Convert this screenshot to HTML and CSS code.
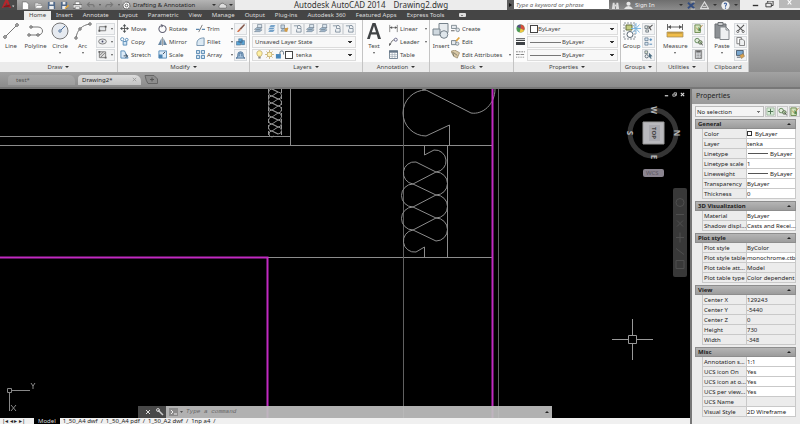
FILE: index.html
```html
<!DOCTYPE html>
<html lang="en">
<head>
    <meta charset="UTF-8">
    <meta name="viewport" content="width=device-width, initial-scale=1.0">
    <title>Autodesk AutoCAD 2014 - Drawing2.dwg</title>
    <link rel="stylesheet" href="styles.css">
</head>
<body>
    <!-- shared icons -->
    <svg class="sprite" aria-hidden="true">
        <symbol id="i-line" viewBox="0 0 18 18"><path d="M3 15L15 3" stroke="#777" fill="none"/><g fill="#fff" stroke="#555"><circle cx="3" cy="15" r="1.3"/><circle cx="15" cy="3" r="1.3"/></g></symbol>
        <symbol id="i-pline" viewBox="0 0 18 18"><path d="M4 5H11C17 5 17 13 11 13H2" stroke="#777" fill="none"/><g fill="#fff" stroke="#555"><circle cx="4" cy="5" r="1.2"/><circle cx="11" cy="13" r="1.2"/><circle cx="2" cy="13" r="1.2"/></g></symbol>
        <symbol id="i-circle" viewBox="0 0 18 18"><circle cx="9" cy="9" r="8" fill="#e6eaf0" stroke="#777"/><path d="M9 9L14 4" stroke="#4b6f9b"/><circle cx="9" cy="9" r="1.2" fill="#fff" stroke="#4b6f9b"/></symbol>
        <symbol id="i-arc" viewBox="0 0 18 18"><path d="M2 16C3 8 8 3 16 2" stroke="#777" fill="none"/><g fill="#fff" stroke="#555"><circle cx="2" cy="16" r="1.2"/><circle cx="6" cy="7" r="1.2"/><circle cx="16" cy="2" r="1.2"/></g></symbol>
        <symbol id="i-rect" viewBox="0 0 10 10"><path d="M1.5 3H8.5V7.500H1.500Z" fill="#e4e7ea" stroke="#777"/><path d="M7.500 2h2v2h-2zM.5 6.500h2v2h-2z" fill="#555"/></symbol>
        <symbol id="i-ellipse" viewBox="0 0 10 10"><ellipse cx="5" cy="5" rx="4.300" ry="2.800" fill="#e4e7ea" stroke="#777"/><circle cx="5" cy="5" r="1" fill="#446"/></symbol>
        <symbol id="i-hatch" viewBox="0 0 10 10"><path d="M1.500 2H8.500V8.500H1.500Z" fill="#ddd" stroke="#777"/><path d="M2 6L6 2M3 8L8 3" stroke="#777"/><path d="M.5 1h2v2h-2zM7.500 7.500h2v2h-2z" fill="#666"/></symbol>
        <symbol id="i-move" viewBox="0 0 10 10"><path d="M5 1.500V8.500M1.500 5H8.500" stroke="#555"/><path d="M5 0L7 2.500H3zM5 10L7 7.500H3zM0 5L2.500 3V7zM10 5L7.500 3V7z" fill="#4e5356"/></symbol>
        <symbol id="i-rotate" viewBox="0 0 10 10"><path d="M3 2A4 4 0 1 0 7 2" fill="none" stroke="#667" stroke-width="1.200"/><path d="M3 0L7 1.700L4 4z" fill="#667"/></symbol>
        <symbol id="i-trim" viewBox="0 0 10 10"><path d="M0 6H4M6.500 6H10" stroke="#5d87ad" stroke-width="1.200"/><path d="M3 9L7 1" stroke="#777"/></symbol>
        <symbol id="i-copy" viewBox="0 0 10 10"><circle cx="2.500" cy="2.500" r="1.800" fill="#fff" stroke="#5489b5"/><circle cx="7.500" cy="3" r="1.500" fill="#fff" stroke="#5489b5"/><path d="M3.500 5h4v4h-4z" fill="#d3e5f3" stroke="#5489b5"/></symbol>
        <symbol id="i-mirror" viewBox="0 0 10 10"><path d="M4 1V9H0zM6 1V9H10z" fill="#6a89a5"/><path d="M5 0V10" stroke="#555" stroke-width=".6"/></symbol>
        <symbol id="i-fillet" viewBox="0 0 10 10"><path d="M1 9.500V7C1 3 4 1 9 1V9.500Z" fill="#dce9f3" stroke="#7090ab"/></symbol>
        <symbol id="i-stretch" viewBox="0 0 10 10"><path d="M1 1H5L9 9H1Z" fill="#dbeaf7" stroke="#5489b5"/><path d="M4 6.500H8M6 4.500L8.500 6.500L6 9" stroke="#345" fill="none"/></symbol>
        <symbol id="i-scale" viewBox="0 0 10 10"><path d="M1 1H9.500V9H1Z" fill="#dbeaf7" stroke="#5489b5"/><path d="M1 5H5V9H1Z" fill="#4c84b2"/><path d="M5.500 4.500L8 2" stroke="#345"/></symbol>
        <symbol id="i-array" viewBox="0 0 10 10"><path d="M.5.5h3.500v3.500H.5zM6 .5h3.500v3.500H6zM.5 6h3.500v3.500H.5zM6 6h3.500v3.500H6z" fill="#d3e4f1" stroke="#4f82ae"/></symbol>
        <symbol id="i-erase" viewBox="0 0 10 10"><path d="M9 0L4 5L5.500 6.500L10 1z" fill="#84584a"/><path d="M4 5L1 8.500L3 9L5.500 6.500z" fill="#d0714a"/></symbol>
        <symbol id="i-explode" viewBox="0 0 10 10"><path d="M.5 5H5V9H.5zM3 2H7V6H3zM6 4H9.500V8.500H6z" fill="#5aa5d6" stroke="#357" stroke-width=".5"/></symbol>
        <symbol id="i-offset" viewBox="0 0 10 10"><path d="M0 9C2 9 2 7 2 5A3 3 0 0 1 8 5C8 7 8 9 10 9ZM3.500 7V5A1.500 1.500 0 0 1 6.500 5V7" fill="#a9c5df" stroke="#456d94"/></symbol>
        <symbol id="i-layer" viewBox="0 0 10 10"><path d="M.5 6L3 4H9L6.500 6zM.5 8.500L3 6.500H9L6.500 8.500z" fill="#a9c1d6" stroke="#567" stroke-width=".5"/><path d="M4 .5H8.500V4H4z" fill="#dbe6ee" stroke="#567" stroke-width=".6"/></symbol>
        <symbol id="i-layer2" viewBox="0 0 10 10"><path d="M1 9L3 6H9L7 9zM1 6.500L3 3.500H9L7 6.500zM2 4L4 1H9.500L8 4z" fill="#5c91bf" stroke="#fff" stroke-width=".5"/></symbol>
        <symbol id="i-layer3" viewBox="0 0 10 10"><path d="M1 8L3 5H9L7 8z" fill="#a9c1d6" stroke="#567" stroke-width=".5"/><path d="M1 1H5V5H1z" fill="#c8d8e5" stroke="#567" stroke-width=".6"/><path d="M5 5L9 4L8 9L5 8z" fill="#d59c43"/></symbol>
        <symbol id="i-layer4" viewBox="0 0 10 10"><path d="M1 2H5V5H9V9H4V6" fill="#edf1f4" stroke="#68798a" stroke-width=".8"/><path d="M5 2C7 1 9 2 9 4" fill="none" stroke="#68798a"/></symbol>
        <symbol id="i-bulb" viewBox="0 0 10 10"><path d="M3.500 7C1 4 2 .8 5 .8S9 4 6.500 7Z" fill="#fff1a5" stroke="#a99044" stroke-width=".7"/><path d="M3.700 7.500h2.600v2H3.700z" fill="#888"/></symbol>
        <symbol id="i-sun" viewBox="0 0 10 10"><path d="M5 0V10M0 5H10M1.500 1.500L8.500 8.500M8.500 1.500L1.500 8.500" stroke="#b69b52" stroke-width=".7"/><circle cx="5" cy="5" r="2.600" fill="#fff3b8" stroke="#b69b52" stroke-width=".7"/></symbol>
        <symbol id="i-lock" viewBox="0 0 10 10"><path d="M1 4.500H6.500V9.500H1z" fill="#4787bb"/><path d="M5.500 4.500V3A2 2 0 0 1 9.500 3V5" fill="none" stroke="#567"/></symbol>
        <symbol id="i-text" viewBox="0 0 18 18"><path d="M2 17L7.500 1H10.500L16 17H13L11.700 12.500H6L4.800 17ZM6.800 10.200H11L9 4Z" fill="#414446" fill-rule="evenodd"/></symbol>
        <symbol id="i-linear" viewBox="0 0 10 10"><path d="M.8 1V9M9.200 1V9M1 4H9" stroke="#666" stroke-width=".8"/><path d="M1 4L3.500 2.500V5.500zM9 4L6.500 2.500V5.500z" fill="#555"/></symbol>
        <symbol id="i-leader" viewBox="0 0 10 10"><path d="M.5 9C2 9 2 4 5.500 3" fill="none" stroke="#666"/><circle cx="7.500" cy="3" r="1.700" fill="none" stroke="#668"/><path d="M0 10L.3 6.800L2.300 8z" fill="#555"/></symbol>
        <symbol id="i-table" viewBox="0 0 10 10"><path d="M.5 1h9v8.500h-9z" fill="#fff" stroke="#677889"/><path d="M0 .5h10v2.500H0z" fill="#677889"/><path d="M.5 5.200h9M.5 7.300h9M3.500 3v6M6.500 3v6" stroke="#8a98a6" stroke-width=".6"/></symbol>
        <symbol id="i-insert" viewBox="0 0 18 18"><path d="M7 1.500H16V10.500H7z" fill="#e7ebee" stroke="#76828b"/><path d="M1 7H8V13H1z" fill="#cfd8df" stroke="#76828b"/><circle cx="12" cy="12.500" r="3.800" fill="#dfe6eb" stroke="#76828b"/></symbol>
        <symbol id="i-create" viewBox="0 0 10 10"><path d="M.5 5V1.500H6V5z" fill="#e5e9ed" stroke="#717d86" stroke-width=".9"/><circle cx="7.500" cy="6.500" r="2" fill="#dce2e7" stroke="#717d86" stroke-width=".8"/><path d="M0 7.500H4" stroke="#555"/></symbol>
        <symbol id="i-edit" viewBox="0 0 10 10"><path d="M.5 4H5.500V8.500H.5z" fill="#e5e9ed" stroke="#717d86"/><circle cx="7" cy="7.500" r="1.800" fill="#dce2e7" stroke="#717d86" stroke-width=".8"/><path d="M5 4L8.500 0L10 1L6.500 5z" fill="#e0a53d"/></symbol>
        <symbol id="i-attr" viewBox="0 0 10 10"><path d="M0 1.500L4 0L9.500 3L7 9L3 7z" fill="#d9c8a6" stroke="#887755" stroke-width=".7"/><path d="M3 3L7 6M2 2L3 7" stroke="#665" stroke-width=".8"/></symbol>
        <symbol id="i-wheel" viewBox="0 0 10 10"><circle cx="5" cy="5" r="4.500" fill="#4d9a54"/><path d="M5 5V.5A4.500 4.500 0 0 1 9 7z" fill="#d94e3f"/><path d="M5 5V.5A4.500 4.500 0 0 0 1 3z" fill="#554d84"/><path d="M5 5L9 7A4.500 4.500 0 0 1 4 9.400z" fill="#f0c640"/></symbol>
        <symbol id="i-weight" viewBox="0 0 10 10"><path d="M0 1h10v1H0zM0 3h10v1.500H0zM0 5.500h10v3.500H0z" fill="#3f4346"/></symbol>
        <symbol id="i-ltype" viewBox="0 0 10 10"><path d="M0 2H10" stroke="#777" stroke-dasharray="2 1"/><path d="M0 5H10" stroke="#777" stroke-dasharray="4 1"/><path d="M0 8H10" stroke="#777" stroke-dasharray="1 1"/></symbol>
        <symbol id="i-group" viewBox="0 0 18 18"><path d="M1 1H12V17H1z" fill="#f5f6f7" stroke="#8d959b" stroke-dasharray="2 1"/><path d="M3 3h6v5H3z" fill="#c3cd82" stroke="#66703c"/><circle cx="7" cy="12.500" r="3" fill="#fff" stroke="#596671"/><path d="M13 1V12M8 6.500H18M9.500 2.500L16.500 10.500M16.500 2.500L9.500 10.500" stroke="#76b3df" stroke-width=".9"/></symbol>
        <symbol id="i-ungroup" viewBox="0 0 10 10"><path d="M1 2H4V5H1zM2 6.500H5V9H2z" fill="#e5e9e2" stroke="#596671" stroke-width=".8"/><path d="M5 5L9.500 1M5 2L8 7" stroke="#555" stroke-width="1.200"/></symbol>
        <symbol id="i-gedit" viewBox="0 0 10 10"><path d="M1 1H4.500V4H1zM1 6H4.500V9H1z" fill="#d8e7f3" stroke="#59738b" stroke-width=".8"/><path d="M6 3H9M7.500 1.500V4.500M6 8H9" stroke="#4783b5"/></symbol>
        <symbol id="i-gsel" viewBox="0 0 10 10"><path d="M1 1H4V4H1z" fill="#dce6d0" stroke="#596671" stroke-width=".8"/><circle cx="3" cy="7" r="1.800" fill="none" stroke="#596671"/><path d="M5.500 3L9.500 7L7.500 7.300L8.500 9.500L7.500 10L6.500 7.800L5.500 9z" fill="#4d6e83"/></symbol>
        <symbol id="i-measure" viewBox="0 0 18 18"><path d="M1.500 2V8M16.500 2V8M2 5H16" stroke="#666"/><path d="M2 5L5 3V7zM16 5L13 3V7z" fill="#555"/><path d="M1 10h16v5H1z" fill="#f0bd4a" stroke="#9d8450" stroke-width=".7"/><path d="M3 10v2M5 10v2M7 10v2M9 10v2M11 10v2M13 10v2M15 10v2" stroke="#866c36" stroke-width=".6"/></symbol>
        <symbol id="i-qsel" viewBox="0 0 10 10"><path d="M1 1H7V9.500H1z" fill="#d5e5bf" stroke="#678548"/><path d="M2.500 4L5 7L9.500 1" fill="none" stroke="#b48b46"/><path d="M5 3L8 7L5 8z" fill="#4d8750"/></symbol>
        <symbol id="i-find" viewBox="0 0 10 10"><circle cx="3.500" cy="4" r="2.500" fill="#e1eadb" stroke="#5b8452"/><circle cx="7" cy="6" r="2" fill="#b6d1a6" stroke="#5b6b52"/><path d="M7 6L10 9.500" stroke="#444"/></symbol>
        <symbol id="i-calc" viewBox="0 0 10 10"><path d="M1.500.5H8.500V9.500H1.500z" fill="#d7dadd" stroke="#777"/><path d="M2.500 2H7.500" stroke="#555" stroke-width="1.500"/><path d="M3 4.500H8M3 6.200H8M3 8H8" stroke="#777" stroke-dasharray="1 .8" stroke-width=".9"/></symbol>
        <symbol id="i-paste" viewBox="0 0 18 18"><path d="M2 2H13V16H2z" fill="#8c9094" stroke="#6d7175"/><path d="M5 .5H10V3.500H5z" fill="#c8cacc" stroke="#6d7175"/><path d="M7 5H13L16 8V17.500H7z" fill="#eef0f1" stroke="#84898d"/><path d="M13 5V8H16" fill="none" stroke="#84898d"/></symbol>
        <symbol id="i-cut" viewBox="0 0 10 10"><path d="M1 1L8 8M9 1L2 8" stroke="#555" stroke-width="1.200"/><circle cx="2" cy="8.300" r="1.200" fill="#fff" stroke="#555"/><circle cx="8" cy="8.300" r="1.200" fill="#fff" stroke="#555"/></symbol>
        <symbol id="i-pages" viewBox="0 0 10 10"><path d="M1 .5H6V7.500H1z" fill="#fff" stroke="#777"/><path d="M4 2.500H7.500L9.500 4.500V9.500H4z" fill="#eef0f1" stroke="#777"/></symbol>
        <symbol id="i-match" viewBox="0 0 10 10"><path d="M.5.5H8V6H.5z" fill="#79a7cf" stroke="#456"/><path d="M1 8H5" stroke="#456"/><path d="M4 6L8 4L9.500 7L6 9.500z" fill="#d9a24e" stroke="#765" stroke-width=".5"/></symbol>
        <symbol id="i-new" viewBox="0 0 10 10"><path d="M1.500 1H6L8.500 3.500V9.500H1.500z" fill="#fff" stroke="#666" stroke-width=".7"/></symbol>
        <symbol id="i-open" viewBox="0 0 10 10"><path d="M1 2H4L5 3H8V8H1z" fill="#ddd" stroke="#777" stroke-width=".6"/><path d="M1 8L3 5H10L8 8z" fill="#fff" stroke="#777" stroke-width=".6"/></symbol>
        <symbol id="i-save" viewBox="0 0 10 10"><path d="M1 1H9V9H1z" fill="#526a8a"/><path d="M3 1H7V4H3zM2.500 5.500H7.500V9H2.500z" fill="#eee"/></symbol>
        <symbol id="i-saveas" viewBox="0 0 10 10"><path d="M1 1H8V9H1z" fill="#526a8a"/><path d="M3 1H6V4H3zM2.500 5.500H6.500V9H2.500z" fill="#eee"/><path d="M5 8L9 4L10 5.500L6.500 9z" fill="#e0a53d"/></symbol>
        <symbol id="i-print" viewBox="0 0 10 10"><path d="M2.500 1H7.500V4H2.500z" fill="#fff" stroke="#555" stroke-width=".6"/><path d="M0 4H10V8H0z" fill="#e4e4e4" stroke="#444" stroke-width=".7"/><path d="M2.500 6.500H7.500V9H2.500z" fill="#fff" stroke="#444" stroke-width=".5"/></symbol>
        <symbol id="i-undo" viewBox="0 0 10 10"><path d="M2 4H7Q9 4 9 7M4 1.500L1.500 4L4 6.500" fill="none" stroke="#777" stroke-width="1.300"/></symbol>
        <symbol id="i-redo" viewBox="0 0 10 10"><path d="M8 4H3Q1 4 1 7M6 1.500L8.500 4L6 6.500" fill="none" stroke="#777" stroke-width="1.300"/></symbol>
        <symbol id="i-gear" viewBox="0 0 10 10"><circle cx="5" cy="5" r="3.800" fill="#fff" stroke="#555" stroke-dasharray="1.500 .8" stroke-width="1.300"/><circle cx="5" cy="5" r="1.500" fill="#fff" stroke="#555"/></symbol>
        <symbol id="i-cloud" viewBox="0 0 10 10"><path d="M2 8A2 2 0 0 1 2 4.500A3 3 0 0 1 7.500 4A2 2 0 0 1 8 8z" fill="#ddd" stroke="#555" stroke-width=".7"/></symbol>
        <symbol id="i-binoc" viewBox="0 0 10 10"><path d="M1 9L2 2H4L4.500 9zM5.500 9L6 2H8L9 9z" fill="#ddd"/><path d="M4 4h2v2H4z" fill="#ddd"/></symbol>
        <symbol id="i-user" viewBox="0 0 10 10"><circle cx="5" cy="3" r="2.300" fill="#e7e7e7"/><path d="M0 9Q2 5.500 5 5.500T10 9z" fill="#e7e7e7"/></symbol>
        <symbol id="i-x" viewBox="0 0 10 10"><path d="M1 2L8 8M8 2L1 8" stroke="#334d80" stroke-width="2"/><path d="M4 1H9M4 9H9" stroke="#ddd" stroke-width=".8"/></symbol>
        <symbol id="i-a360" viewBox="0 0 10 10"><path d="M5 1L9.500 8.500H.5z" fill="none" stroke="#ddd" stroke-width="1.200"/><path d="M3 6H7" stroke="#ddd"/></symbol>
        <symbol id="i-help" viewBox="0 0 10 10"><circle cx="5" cy="5" r="4.600" fill="#eee"/><path d="M3.500 3.500Q4 2 5.500 2.500T5 5.500V6.500M5 7.300V8.500" stroke="#3e62a0" fill="none" stroke-width="1.200"/></symbol>
        <symbol id="i-add" viewBox="0 0 10 10"><path d="M1 1H9V9H1z" fill="#d8ecd8" stroke="#789878" stroke-width=".6"/><path d="M5 2V8M2 5H8" stroke="#456b48"/></symbol>
    </svg>

    <header class="titlebar">
        <button class="app-button" aria-label="Application menu">
            <svg viewBox="0 0 16 11"><path d="M1 9L5 0H8L11.500 9L8.500 8L6.500 3L4 8Z" fill="#b3272d"/><path d="M3 7L10 5V7.500L4 8Z" fill="#8c1318"/><path d="M12.500 6H15L13.700 8Z" fill="#ddd"/></svg>
        </button>
        <nav class="quick" aria-label="Quick access">
            <button aria-label="New"><svg><use href="#i-new"/></svg></button>
            <button aria-label="Open"><svg><use href="#i-open"/></svg></button>
            <button aria-label="Save"><svg><use href="#i-save"/></svg></button>
            <button aria-label="Save as"><svg><use href="#i-saveas"/></svg></button>
            <button aria-label="Plot"><svg><use href="#i-print"/></svg></button>
            <button aria-label="Undo"><svg><use href="#i-undo"/></svg></button>
            <i class="caret"></i>
            <button aria-label="Redo"><svg><use href="#i-redo"/></svg></button>
            <i class="caret"></i>
        </nav>
        <div class="workspace">
            <svg><use href="#i-gear"/></svg>
            <select class="plain" aria-label="Workspace"><option>Drafting &amp; Annotation</option></select>
            <i class="caret"></i>
            <svg><use href="#i-cloud"/></svg>
            <i class="caret"></i>
        </div>
        <div class="title"><span>Autodesk AutoCAD 2014</span><span>Drawing2.dwg</span></div>
        <div class="search">
            <i class="play"></i>
            <input type="text" placeholder="Type a keyword or phrase" aria-label="Search">
        </div>
        <div class="infocenter">
            <button aria-label="Search"><svg><use href="#i-binoc"/></svg></button>
            <button class="signin"><svg><use href="#i-user"/></svg>Sign In</button>
            <i class="caret"></i>
            <button aria-label="Exchange"><svg><use href="#i-x"/></svg></button>
            <button aria-label="Autodesk 360"><svg><use href="#i-a360"/></svg></button>
            <i class="caret"></i>
            <button aria-label="Help"><svg><use href="#i-help"/></svg></button>
            <i class="caret"></i>
        </div>
        <div class="window-buttons">
            <button aria-label="Minimize"><svg viewBox="0 0 10 10"><path d="M2 5H8" stroke="#333" stroke-width="1.500"/></svg></button>
            <button aria-label="Restore"><svg viewBox="0 0 10 10"><path d="M1 2.500H7V6.500H1zM3 2V0H9V5H7" fill="none" stroke="#333"/></svg></button>
            <button class="close" aria-label="Close"><svg viewBox="0 0 10 10"><path d="M3 0L7 5M7 0L3 5" stroke="#fff" stroke-width="1.300"/></svg></button>
        </div>
    </header>

    <nav class="menu">
        <a class="active" href="#">Home</a>
        <a href="#">Insert</a>
        <a href="#">Annotate</a>
        <a href="#">Layout</a>
        <a href="#">Parametric</a>
        <a href="#">View</a>
        <a href="#">Manage</a>
        <a href="#">Output</a>
        <a href="#">Plug-ins</a>
        <a href="#">Autodesk 360</a>
        <a href="#">Featured Apps</a>
        <a href="#">Express Tools</a>
        <button class="ribbon-toggle" aria-label="Minimize ribbon"><i class="caret up"></i></button>
    </nav>

    <div class="ribbon">
        <section class="panel draw">
            <div class="body">
                <button class="big"><svg><use href="#i-line"/></svg>Line</button>
                <button class="big"><svg><use href="#i-pline"/></svg>Polyline</button>
                <button class="big"><svg><use href="#i-circle"/></svg>Circle<i class="caret"></i></button>
                <button class="big"><svg><use href="#i-arc"/></svg>Arc<i class="caret"></i></button>
                <div class="stack wide">
                    <button class="mini" aria-label="Rectangle"><svg><use href="#i-rect"/></svg><i class="caret"></i></button>
                    <button class="mini" aria-label="Ellipse"><svg><use href="#i-ellipse"/></svg><i class="caret"></i></button>
                    <button class="mini" aria-label="Hatch"><svg><use href="#i-hatch"/></svg><i class="caret"></i></button>
                </div>
            </div>
            <h2>Draw <i class="caret"></i></h2>
        </section>
        <section class="panel modify">
            <div class="body">
                <button class="tool"><svg><use href="#i-move"/></svg>Move</button>
                <button class="tool"><svg><use href="#i-rotate"/></svg>Rotate</button>
                <button class="tool"><svg><use href="#i-trim"/></svg>Trim<i class="caret"></i></button>
                <button class="mini" aria-label="Erase"><svg><use href="#i-erase"/></svg></button>
                <button class="tool"><svg><use href="#i-copy"/></svg>Copy</button>
                <button class="tool"><svg><use href="#i-mirror"/></svg>Mirror</button>
                <button class="tool"><svg><use href="#i-fillet"/></svg>Fillet<i class="caret"></i></button>
                <button class="mini" aria-label="Explode"><svg><use href="#i-explode"/></svg></button>
                <button class="tool"><svg><use href="#i-stretch"/></svg>Stretch</button>
                <button class="tool"><svg><use href="#i-scale"/></svg>Scale</button>
                <button class="tool"><svg><use href="#i-array"/></svg>Array<i class="caret"></i></button>
                <button class="mini" aria-label="Offset"><svg><use href="#i-offset"/></svg></button>
            </div>
            <h2>Modify <i class="caret"></i></h2>
        </section>
        <section class="panel layers">
            <div class="body">
                <div class="icons">
                    <button class="mini" aria-label="Layer properties"><svg><use href="#i-layer"/></svg></button>
                    <button class="mini" aria-label="Make current"><svg><use href="#i-layer2"/></svg></button>
                    <button class="mini" aria-label="Match layer"><svg><use href="#i-layer3"/></svg></button>
                    <button class="mini" aria-label="Previous layer"><svg><use href="#i-layer4"/></svg></button>
                    <button class="mini" aria-label="Isolate"><svg><use href="#i-layer"/></svg></button>
                    <button class="mini" aria-label="Unisolate"><svg><use href="#i-layer"/></svg></button>
                    <button class="mini" aria-label="Freeze"><svg><use href="#i-layer4"/></svg></button>
                    <button class="mini" aria-label="Layer off"><svg><use href="#i-layer4"/></svg></button>
                </div>
                <select class="combo" aria-label="Layer state"><option>Unsaved Layer State</option></select>
                <div class="combo layer-combo">
                    <svg><use href="#i-bulb"/></svg><svg><use href="#i-sun"/></svg><svg><use href="#i-lock"/></svg><i class="swatch"></i>
                    <select class="plain" aria-label="Layer"><option>tenka</option></select>
                </div>
            </div>
            <h2>Layers <i class="caret"></i></h2>
        </section>
        <section class="panel annotation">
            <div class="body">
                <button class="big"><svg><use href="#i-text"/></svg>Text<i class="caret"></i></button>
                <div class="stack">
                    <button class="tool"><svg><use href="#i-linear"/></svg>Linear<i class="caret"></i></button>
                    <button class="tool"><svg><use href="#i-leader"/></svg>Leader<i class="caret"></i></button>
                    <button class="tool"><svg><use href="#i-table"/></svg>Table</button>
                </div>
            </div>
            <h2>Annotation <i class="caret"></i></h2>
        </section>
        <section class="panel block">
            <div class="body">
                <button class="big"><svg><use href="#i-insert"/></svg>Insert</button>
                <div class="stack">
                    <button class="tool"><svg><use href="#i-create"/></svg>Create</button>
                    <button class="tool"><svg><use href="#i-edit"/></svg>Edit</button>
                    <button class="tool"><svg><use href="#i-attr"/></svg>Edit Attributes<i class="caret"></i></button>
                </div>
            </div>
            <h2>Block <i class="caret"></i></h2>
        </section>
        <section class="panel props">
            <div class="body">
                <svg><use href="#i-wheel"/></svg>
                <div class="combo"><i class="swatch"></i><select class="plain" aria-label="Object color"><option>ByLayer</option></select></div>
                <svg><use href="#i-weight"/></svg>
                <select class="combo lined" aria-label="Lineweight"><option>ByLayer</option></select>
                <svg><use href="#i-ltype"/></svg>
                <select class="combo lined" aria-label="Linetype"><option>ByLayer</option></select>
            </div>
            <h2>Properties <i class="caret"></i></h2>
        </section>
        <section class="panel groups">
            <div class="body">
                <button class="big"><svg><use href="#i-group"/></svg>Group</button>
                <div class="stack">
                    <button class="mini" aria-label="Ungroup"><svg><use href="#i-ungroup"/></svg></button>
                    <button class="mini" aria-label="Group edit"><svg><use href="#i-gedit"/></svg></button>
                    <button class="mini" aria-label="Group selection"><svg><use href="#i-gsel"/></svg></button>
                </div>
            </div>
            <h2>Groups <i class="caret"></i></h2>
        </section>
        <section class="panel utilities">
            <div class="body">
                <button class="big"><svg><use href="#i-measure"/></svg>Measure<i class="caret"></i></button>
                <div class="stack">
                    <button class="mini" aria-label="Quick select"><svg><use href="#i-qsel"/></svg></button>
                    <button class="mini" aria-label="Select all"><svg><use href="#i-find"/></svg></button>
                    <button class="mini" aria-label="Calculator"><svg><use href="#i-calc"/></svg></button>
                </div>
            </div>
            <h2>Utilities <i class="caret"></i></h2>
        </section>
        <section class="panel clipboard">
            <div class="body">
                <button class="big"><svg><use href="#i-paste"/></svg>Paste<i class="caret"></i></button>
                <div class="stack">
                    <button class="mini" aria-label="Cut"><svg><use href="#i-cut"/></svg></button>
                    <button class="mini" aria-label="Copy clip"><svg><use href="#i-pages"/></svg></button>
                    <button class="mini" aria-label="Match properties"><svg><use href="#i-match"/></svg></button>
                </div>
            </div>
            <h2>Clipboard</h2>
        </section>
    </div>

    <nav class="file-tabs">
        <a href="#">test*</a>
        <a class="active" href="#">Drawing2*<svg viewBox="0 0 6 6"><path d="M1 1L5 5M5 1L1 5" stroke="#999"/></svg></a>
        <button aria-label="New drawing"><svg viewBox="0 0 14 9"><path d="M1 .5H10L13.500 4V8.500H4Q2 6 1 .5Z" fill="#8d8d8d" stroke="#666"/><path d="M8 2.500V6.500M6 4.500H10" stroke="#555"/></svg></button>
    </nav>

    <main>
        <div class="workarea">
            <div class="canvas">
                <svg class="drawing" viewBox="0 89 690 329" preserveAspectRatio="xMinYMin slice">
                    <g fill="none" stroke="#8c8c8c">
                        <!-- walls -->
                        <path d="M0 136.500H290M290.500 89V145M0 145.500H493M268 257.500H493M447.500 145V257M449.500 125V145"/>
                        <path d="M403.500 89V418M498.500 89V418" stroke="#606060"/>
                        <!-- insulation -->
                        <path d="M449.500 125L426 136A23 23 0 0 1 426 90L422 89M426 90L471 113C483 115 495 104 495 89"/>
                        <path d="M424.500 145V155L434 150A11 11 0 1 1 436 172L413 184A11 11 0 0 0 413 207L436 218"/>
                        <path d="M436 172L416 162A11 11 0 1 0 413 184L436 195A11 11 0 0 1 436 218L413 230A11 11 0 1 0 416 252L424.500 247V257"/>
                        <path d="M436 172A11 11 0 0 1 436 195L413 207A11 11 0 0 0 413 230L436 241A11 11 0 0 0 436 218"/>
                        <!-- narrow insulation -->
                        <path d="M268.500 89V136M281.500 89V136" stroke-dasharray="4 2" stroke="#999"/>
                        <path d="M272 89L278 92L272 96L278 99L272 103L278 106L272 110L278 113L272 117L278 120L272 124L278 127L272 131L278 134"/>
                        <path d="M278 92L272 89M278 99L272 96M278 106L272 103M278 113L272 110M278 120L272 117M278 127L272 124M278 134L272 131"/>
                        <path d="M272 89a3 3 0 0 0 0 7a3 3 0 0 0 0 7a3 3 0 0 0 0 7a3 3 0 0 0 0 7a3 3 0 0 0 0 7a3 3 0 0 0 0 7a3 3 0 0 0 0 6l2-1"/>
                        <path d="M278 92a3 3 0 0 1 0 7a3 3 0 0 1 0 7a3 3 0 0 1 0 7a3 3 0 0 1 0 7a3 3 0 0 1 0 7a3 3 0 0 1 0 7"/>
                    </g>
                    <path d="M0 257.500H267.500V418M492.500 89V418" fill="none" stroke="#c22ac2" stroke-width="2"/>
                    <!-- cursor -->
                    <path d="M612 339.500H628M637 339.500H653M632.500 319V335M632.500 344V360M628.500 335.500H636.500V343.500H628.500Z" fill="none" stroke="#999"/>
                    <!-- ucs icon -->
                    <path d="M7.500 388.500H11.500V392.500H7.500ZM11 390.500H30M9.500 392V411M31 383L33 386L35 383M33 386V389M11 405L16 411M16 405L11 411" fill="none" stroke="#888"/>
                </svg>
                <div class="doc-buttons">
                    <button aria-label="Minimize drawing"><svg viewBox="0 0 6 6"><path d="M1 4.500H5" stroke="#ccc" stroke-width="1.500"/></svg></button>
                    <button aria-label="Restore drawing"><svg viewBox="0 0 6 6"><path d="M1 2.500H4V5H1zM2.500 2V1H5.500V4H4" fill="none" stroke="#ccc"/></svg></button>
                    <button aria-label="Close drawing"><svg viewBox="0 0 6 6"><path d="M1 1L5 5M5 1L1 5" stroke="#ddd" stroke-width="1.300"/></svg></button>
                </div>
                <svg class="viewcube" viewBox="0 0 60 74">
                    <circle cx="30" cy="29" r="23" fill="none" stroke="#353535" stroke-width="5"/>
                    <path d="M20 18H41V40H20Z" fill="#b9b9bd" stroke="#999"/>
                    <path d="M26 21H37V37H26Z" fill="#aaaab0"/>
                    <g text-anchor="middle">
                        <text class="top" transform="translate(29 29) rotate(90)">TOP</text>
                        <text transform="translate(28 6) rotate(90)">W</text>
                        <text transform="translate(4 29) rotate(90)">S</text>
                        <text transform="translate(51 29) rotate(90)">N</text>
                        <text transform="translate(28 53) rotate(90)">E</text>
                    </g>
                    <rect x="20" y="65" width="21" height="8" rx="2" fill="#8b8590"/>
                    <text class="wcs" x="23" y="71">WCS</text>
                </svg>
                <div class="navbar">
                    <svg viewBox="0 0 14 88"><g fill="none" stroke="#4e4e4e"><circle cx="7" cy="14" r="4"/><path d="M3 26H11M4 32L10 38M10 32L4 38M7 44V54M3 49H11M3 60L11 66"/><path d="M3 72H11V80H3Z"/></g></svg>
                </div>
                <form class="command">
                    <div class="handle">
                        <svg viewBox="0 0 28 12"><path d="M8 4L12 8M12 4L8 8" stroke="#ddd"/><path d="M20 4L25 9" stroke="#ccc" stroke-width="1.500"/><circle cx="20" cy="4" r="1.500" fill="none" stroke="#ccc"/></svg>
                    </div>
                    <svg class="prompt" viewBox="0 0 14 8"><path d="M0 0H9V8H0Z" fill="#8b8b8b"/><path d="M2 2L4 4L2 6M5 6H8" fill="none" stroke="#eee"/><path d="M11 3H14L12.500 5Z" fill="#555"/></svg>
                    <input type="text" placeholder="Type a command" aria-label="Command">
                    <i class="caret up"></i>
                </form>
            </div>
            <nav class="layout-tabs">
                <span class="arrows">|◂ ◂ ▸ ▸|</span>
                <a class="active" href="#">Model</a>
                <a href="#">1_50_A4 dwf</a>/
                <a href="#">1_50_A4 pdf</a>/
                <a href="#">1_50_A2 dwf</a>/
                <a href="#">1np a4</a>/
            </nav>
        </div>

        <aside class="palette">
            <h1>Properties</h1>
            <div class="selection">
                <select aria-label="Selection"><option>No selection</option></select>
                <button aria-label="Toggle pickadd"><svg><use href="#i-add"/></svg></button>
                <button aria-label="Select objects"><svg><use href="#i-find"/></svg></button>
                <button aria-label="Quick select"><svg><use href="#i-qsel"/></svg></button>
            </div>
            <table>
                <caption>General <i class="caret up"></i></caption>
                <tr><th>Color</th><td><i class="box"></i>ByLayer</td></tr>
                <tr><th>Layer</th><td>tenka</td></tr>
                <tr><th>Linetype</th><td><i class="rule"></i>ByLayer</td></tr>
                <tr><th>Linetype scale</th><td>1</td></tr>
                <tr><th>Lineweight</th><td><i class="rule"></i>ByLayer</td></tr>
                <tr><th>Transparency</th><td>ByLayer</td></tr>
                <tr><th>Thickness</th><td>0</td></tr>
            </table>
            <table>
                <caption>3D Visualization <i class="caret up"></i></caption>
                <tr><th>Material</th><td>ByLayer</td></tr>
                <tr><th>Shadow displ...</th><td>Casts and Recei...</td></tr>
            </table>
            <table class="locked">
                <caption>Plot style <i class="caret up"></i></caption>
                <tr><th>Plot style</th><td>ByColor</td></tr>
                <tr><th>Plot style table</th><td class="editable">monochrome.ctb</td></tr>
                <tr><th>Plot table att...</th><td>Model</td></tr>
                <tr><th>Plot table type</th><td>Color dependent</td></tr>
            </table>
            <table class="locked">
                <caption>View <i class="caret up"></i></caption>
                <tr><th>Center X</th><td>129243</td></tr>
                <tr><th>Center Y</th><td>-5440</td></tr>
                <tr><th>Center Z</th><td>0</td></tr>
                <tr><th>Height</th><td>730</td></tr>
                <tr><th>Width</th><td>-348</td></tr>
            </table>
            <table>
                <caption>Misc <i class="caret up"></i></caption>
                <tr><th>Annotation s...</th><td>1:1</td></tr>
                <tr><th>UCS icon On</th><td>Yes</td></tr>
                <tr><th>UCS icon at o...</th><td>Yes</td></tr>
                <tr><th>UCS per view...</th><td>Yes</td></tr>
                <tr class="locked"><th>UCS Name</th><td></td></tr>
                <tr><th>Visual Style</th><td>2D Wireframe</td></tr>
            </table>
        </aside>
    </main>
</body>
</html>
```

FILE: styles.css
```css
* {
    box-sizing: border-box;
}

body {
    margin: 0;
    height: 100vh;
    display: flex;
    flex-direction: column;
    overflow: hidden;
    background-color: #8e8e8e;
    color: #444;
    font-family: "Noto Sans", "Open Sans", sans-serif;
    font-size: 6px;
    line-height: 8px;
}

button, select, input {
    margin: 0;
    padding: 0;
    border: none;
    border-radius: 0;
    background: none;
    color: inherit;
    font: inherit;
    appearance: none;
}

a {
    color: inherit;
    text-decoration: none;
}

svg {
    display: block;
    flex: none;
    width: 9px;
    height: 9px;
}

.sprite {
    position: absolute;
    width: 0;
    height: 0;
}

.caret {
    flex: none;
    display: inline-block;
    border: 2px solid transparent;
    border-top-color: #333;
    border-bottom: none;
}

.caret.up {
    border-top: none;
    border-bottom: 2px solid #222;
}

.swatch {
    flex: none;
    width: 8px;
    height: 8px;
    background-color: white;
    border: 1px solid #444;
}

/* title bar */
.titlebar {
    flex: none;
    display: flex;
    height: 10px;
    background-color: #ececec;
}

.app-button {
    width: 17px;
    background-color: #4a4a4a;
}

.app-button svg {
    width: 16px;
    height: 10px;
}

.quick {
    display: flex;
    align-items: center;
    gap: 4px;
    width: 105px;
    padding-left: 4px;
    background: linear-gradient(#a8a8a8, #8a8a8a);
}

.quick .caret {
    border-width: 1px;
    border-top: 2px solid #555;
}

.workspace {
    display: flex;
    align-items: center;
    gap: 2px;
    width: 113px;
    padding-right: 2px;
    background: linear-gradient(#b4b4b4, #929292);
    color: #222;
}

.plain {
    flex: 1;
    min-width: 0;
}

.title {
    flex: 1;
    display: flex;
    justify-content: center;
    gap: 8px;
    color: #333;
    font-size: 8px;
    line-height: 10px;
    white-space: nowrap;
}

.search {
    display: flex;
    align-items: center;
    width: 102px;
    background-color: #5c5c5c;
}

.play {
    margin: 0 2px;
    border: 2px solid transparent;
    border-left: 3px solid #111;
    border-right: none;
}

.search input {
    flex: 1;
    min-width: 0;
    height: 9px;
    padding-left: 2px;
    align-self: flex-start;
    background-color: white;
    font-style: italic;
}

.search input::placeholder, .command input::placeholder {
    color: #666;
    opacity: 1;
}

.infocenter {
    display: flex;
    align-items: center;
    justify-content: space-between;
    width: 131px;
    padding: 0 2px;
    background: linear-gradient(#6e6e6e, #8c8c8c);
    color: #eee;
}

.signin {
    display: flex;
    align-items: center;
    gap: 2px;
    margin-right: 20px;
}

.window-buttons {
    display: flex;
    justify-content: flex-end;
    gap: 5px;
    width: 60px;
}

.window-buttons .close {
    display: flex;
    justify-content: center;
    width: 21px;
    height: 8px;
    background-color: #b9b9b9;
}

/* menu tabs */
.menu {
    flex: none;
    display: flex;
    align-items: flex-end;
    height: 10px;
    padding-left: 24px;
    background-color: #454545;
    color: #ddd;
}

.menu a {
    height: 9px;
    padding: 0 5px;
    white-space: nowrap;
}

.menu .active {
    background-color: #ededed;
    color: #444;
}

.ribbon-toggle {
    display: flex;
    align-items: center;
    justify-content: center;
    align-self: center;
    width: 7px;
    height: 4px;
    margin-left: 9px;
    background-color: #ddd;
    border-radius: 1px;
}

.ribbon-toggle .caret {
    border-width: 1px;
}

/* ribbon */
.ribbon {
    flex: none;
    display: flex;
    height: 52px;
    background: linear-gradient(#c0c0c0, #8e8e8e);
}

.panel {
    flex: none;
    display: flex;
    flex-direction: column;
    border-right: 1px solid #c4c4c4;
    background-color: #fcfcfc;
}

.panel h2 {
    display: flex;
    align-items: center;
    justify-content: center;
    gap: 3px;
    height: 10px;
    margin: 0;
    background-color: #ebebeb;
    font-size: 6px;
    font-weight: normal;
}

.body {
    display: flex;
    height: 42px;
    padding: 2px 2px 1px;
    justify-content: space-between;
}

.big {
    display: flex;
    flex-direction: column;
    align-items: center;
    min-width: 18px;
}

.big svg {
    width: 18px;
    height: 18px;
    margin-bottom: 2px;
}

.big .caret {
    margin-top: 2px;
}

.stack {
    display: grid;
    grid-template-rows: repeat(3, 13px);
}

.mini {
    display: flex;
    align-items: center;
    justify-content: space-between;
    align-self: center;
    height: 12px;
    padding: 0 1px;
    border: 1px solid #d8dbde;
    background-color: #f3f4f5;
}

.tool {
    display: flex;
    align-items: center;
    gap: 2px;
    white-space: nowrap;
}

.tool .caret {
    margin-left: auto;
}

.mini .caret, .tool .caret, .big .caret {
    border-width: 1px;
    border-top: 2px solid #555;
}

.combo {
    display: flex;
    align-items: center;
    align-self: center;
    width: 100%;
    height: 12px;
    padding: 0 2px;
    border: 1px solid #dcdcdc;
    background-color: #f8f8f8;
    background-image: conic-gradient(from -45deg at 50% 100%, #333 90deg, transparent 0);
    background-image: linear-gradient(#333, #333), linear-gradient(#333, #333);
    background-size: 4px 1px, 2px 1px;
    background-position: right 3px top 4px, right 4px top 5px;
    background-repeat: no-repeat;
}

.draw {
    width: 118px;
}

.wide {
    width: 19px;
}

.modify {
    width: 132px;
}

.modify .body {
    display: grid;
    grid-template-columns: 37px 37px 37px 13px;
    grid-template-rows: repeat(3, 13px);
}

.layers {
    width: 113px;
}

.layers .body {
    display: grid;
    grid-template-rows: repeat(3, 13px);
}

.icons {
    display: flex;
    align-items: center;
    justify-content: space-between;
}

.layer-combo {
    gap: 1px;
}

.layer-combo .plain {
    padding-left: 2px;
}

.annotation {
    width: 67px;
}

.annotation .stack {
    width: 38px;
}

.block {
    width: 84px;
}

.block .stack {
    width: 60px;
}

.props {
    width: 107px;
}

.props .body {
    display: grid;
    grid-template-columns: 9px 1fr;
    grid-template-rows: repeat(3, 13px);
    align-items: center;
    column-gap: 2px;
}

.lined {
    padding-left: 34px;
    background-image: linear-gradient(#333, #333), linear-gradient(#333, #333), linear-gradient(#777, #777);
    background-size: 4px 1px, 2px 1px, 31px 1px;
    background-position: right 3px top 4px, right 4px top 5px, left 2px top 5px;
}

.groups {
    width: 36px;
}

.groups .big {
    min-width: 0;
    width: 17px;
}

.groups .body, .clipboard .body {
    padding-right: 1px;
}

.utilities {
    width: 51px;
}

.utilities .body {
    padding-left: 6px;
}

.clipboard {
    width: 41px;
}

.clipboard .body {
    padding-left: 5px;
}

/* drawing tabs */
.file-tabs {
    flex: none;
    display: flex;
    align-items: center;
    gap: 3px;
    height: 17px;
    padding: 0 8px;
    border-bottom: 2px solid #777;
    background: linear-gradient(#a2a2a2, #8c8c8c);
}

.file-tabs a {
    width: 67px;
    height: 10px;
    padding: 1px 8px;
    background: linear-gradient(#aaa, #9e9e9e);
    border-radius: 4px 6px 0 0;
    color: #555;
}

.file-tabs .active {
    display: flex;
    align-items: center;
    justify-content: space-between;
    width: 63px;
    padding: 1px 4px;
    background: linear-gradient(#dcdcdc, #c4c4c4);
    color: #222;
}

.file-tabs a svg {
    width: 5px;
    height: 5px;
}

.file-tabs button svg {
    width: 14px;
    height: 9px;
}

/* work area */
main {
    flex: 1;
    display: flex;
    min-height: 0;
}

.workarea {
    flex: 1;
    display: flex;
    flex-direction: column;
    min-width: 0;
}

.canvas {
    position: relative;
    flex: 1;
    min-height: 0;
    background-color: black;
}

.drawing {
    position: absolute;
    width: 100%;
    height: 100%;
}

.doc-buttons {
    position: absolute;
    top: 3px;
    right: 5px;
    display: flex;
    gap: 3px;
}

.doc-buttons svg {
    width: 5px;
    height: 5px;
}

.viewcube {
    position: absolute;
    top: 15px;
    right: 7px;
    width: 60px;
    height: 74px;
    overflow: visible;
}

.viewcube text {
    fill: #b5b5b5;
    font-size: 8px;
    font-weight: bold;
}

.viewcube .top {
    fill: #444;
    font-size: 6px;
}

.viewcube .wcs {
    fill: #5c5662;
    font-size: 6px;
    font-weight: normal;
}

.navbar {
    position: absolute;
    top: 99px;
    right: 3px;
    background-color: #383838;
    border-radius: 2px;
}

.navbar svg {
    width: 14px;
    height: 89px;
}

.command {
    position: absolute;
    bottom: 0;
    left: 20%;
    right: 20%;
    display: flex;
    align-items: center;
    gap: 3px;
    height: 12px;
    padding-right: 3px;
    background-color: rgba(190, 190, 190, 0.93);
}

.handle {
    background-color: #484848;
}

.handle svg {
    width: 28px;
    height: 12px;
}

.prompt {
    width: 14px;
    height: 8px;
}

.command input {
    flex: 1;
    min-width: 0;
    font-family: "Liberation Mono", monospace;
    font-style: italic;
}

.layout-tabs {
    flex: none;
    display: flex;
    gap: 3px;
    height: 6px;
    background-color: #f0f0f0;
    color: #222;
    line-height: 7px;
    white-space: nowrap;
}

.arrows {
    width: 31px;
    padding-left: 2px;
}

.layout-tabs .active {
    padding: 0 4px;
    background-color: black;
    color: #ddd;
}

/* properties palette */
.palette {
    flex: none;
    width: 110px;
    padding: 0 4px 0 3px;
    border-left: 2px solid #777;
    background-color: #ececec;
    color: #222;
}

.palette h1 {
    height: 15px;
    margin: 0 -4px 2px -3px;
    padding: 3px 4px;
    background: linear-gradient(#aaa, #999);
    font-size: 7px;
    font-weight: normal;
}

.selection {
    display: flex;
    gap: 1px;
    height: 11px;
    margin: 0 -4px 2px 0;
}

.selection select {
    flex: 1;
    min-width: 0;
    padding-left: 1px;
    border: 1px solid #bbb;
    background: #f4f4f4 conic-gradient(from -45deg at 50% 100%, #777 90deg, transparent 0) no-repeat right 3px center / 4px 2px;
}

.selection button {
    border: 1px solid #c9c9c9;
}

.palette table {
    width: 100%;
    margin-bottom: 2px;
    padding-left: 7px;
    border-collapse: separate;
    border-spacing: 0;
    table-layout: fixed;
}

.palette caption {
    height: 10px;
    padding: 0 2px;
    border: 1px solid #8d8d8d;
    background: linear-gradient(#b5b5b5, #9c9c9c);
    font-weight: bold;
    text-align: left;
}

.palette caption .caret {
    float: right;
    margin: 3px 2px;
}

.palette th, .palette td {
    height: 10px;
    padding: 0 0 0 1px;
    border: 1px solid #c9c9c9;
    border-width: 0 1px 1px 0;
    font-weight: normal;
    text-align: left;
    white-space: nowrap;
}

.palette th {
    width: 45px;
    border-left-width: 1px;
}

.palette td {
    padding-left: 0;
    background-color: white;
}

.palette .locked td {
    background-color: #ececec;
}

.palette .locked .editable {
    background-color: white;
}

.box {
    display: inline-block;
    width: 5px;
    height: 5px;
    margin-right: 3px;
    border: 1px solid #333;
}

.rule {
    display: inline-block;
    width: 20px;
    height: 1px;
    margin: 0 2px 2px 1px;
    background-color: #555;
}
```
